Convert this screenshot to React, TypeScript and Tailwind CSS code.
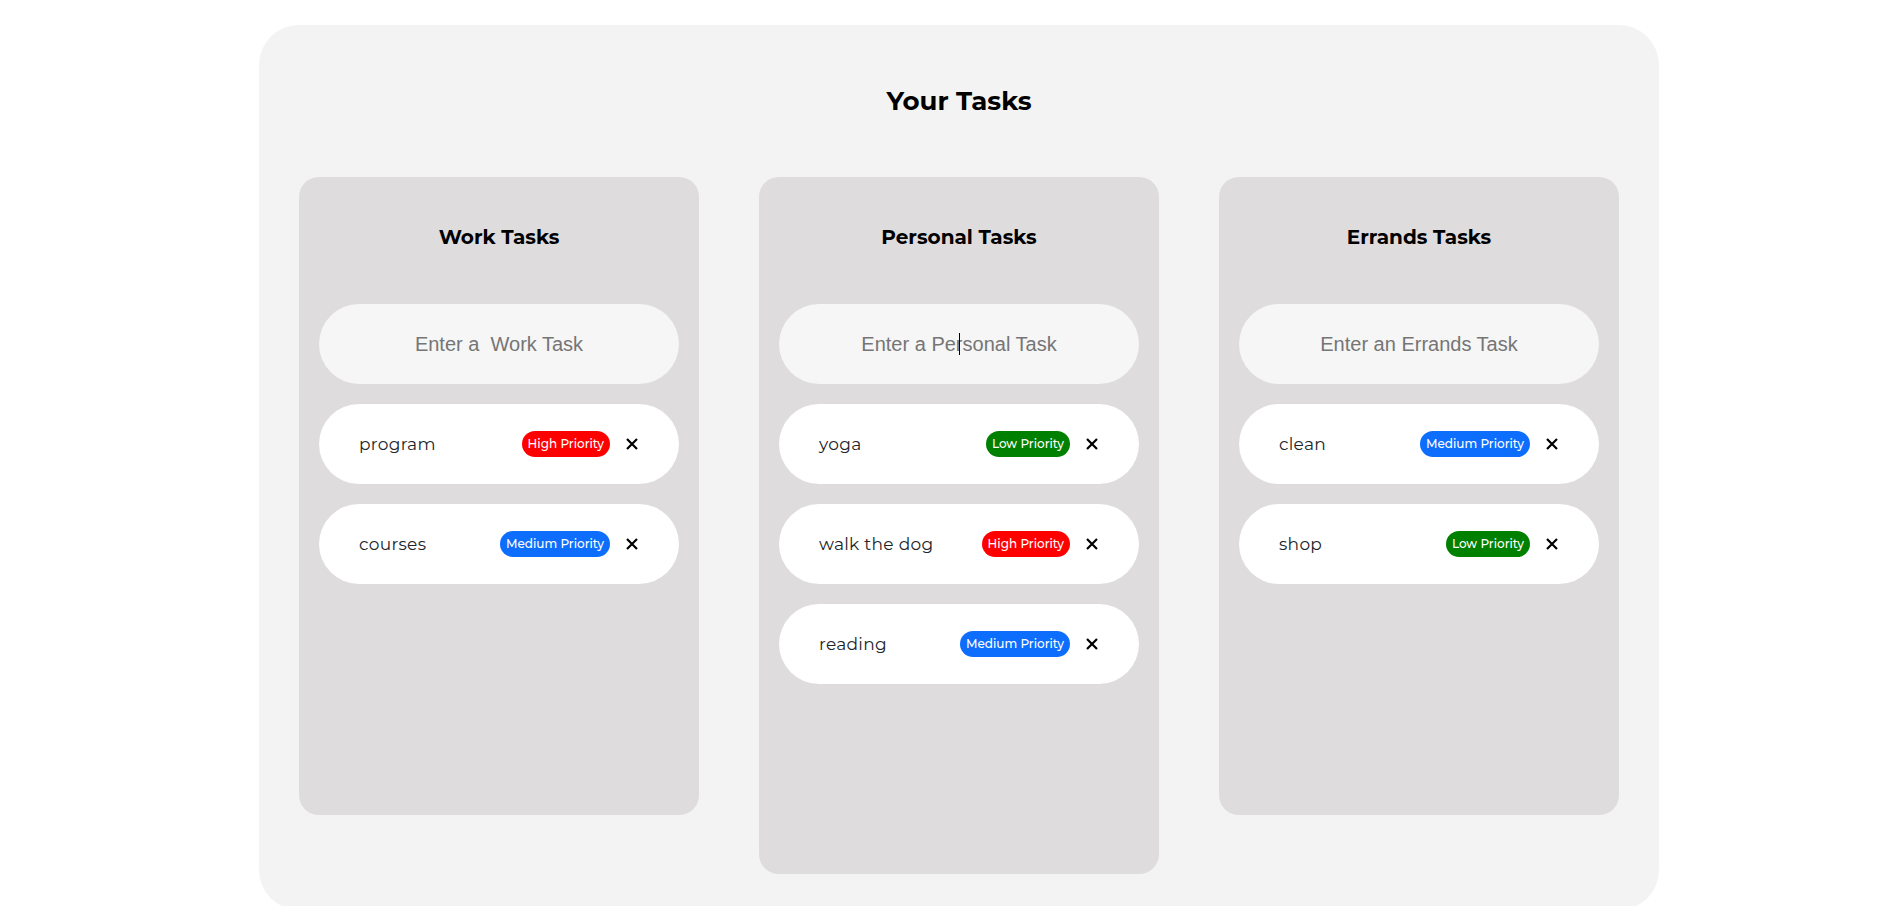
import React from "react";

type Priority = "High" | "Medium" | "Low";

const badgeClass: Record<Priority, string> = {
  High: "bg-[#ff0000]",
  Medium: "bg-[#0d6efd]",
  Low: "bg-[#008000]",
};

function XIcon() {
  return (
    <svg width="12" height="12" viewBox="0 0 12 12" className="shrink-0">
      <path d="M1 1 L11 11 M11 1 L1 11" stroke="#000" strokeWidth="2.2" strokeLinecap="butt" />
    </svg>
  );
}

function TaskItem({ text, priority }: { text: string; priority: Priority }) {
  return (
    <div className="flex h-[80px] w-[360px] items-center justify-between rounded-full bg-white pl-[40px] pr-[41px]">
      <span className="text-[17px] leading-[24px] text-[#212529] tracking-[0.3px]">{text}</span>
      <div className="flex items-center gap-[16px]">
        <span
          className={`${badgeClass[priority]} rounded-full px-[6px] py-[4px] text-[12px] font-medium leading-[18px] text-white`}
        >
          {priority} Priority
        </span>
        <XIcon />
      </div>
    </div>
  );
}

function Column({
  title,
  placeholder,
  tasks,
  cursor,
}: {
  title: string;
  placeholder: string;
  tasks: { text: string; priority: Priority }[];
  cursor?: boolean;
}) {
  return (
    <div className="flex min-h-[638px] w-[400px] flex-col items-center rounded-[20px] bg-[#dedcdd] px-[20px] pb-[190px] pt-[48px]">
      <h2 className="text-[20px] font-bold leading-[24px] text-black">{title}</h2>
      <div className="relative mt-[55px]">
        <input
          placeholder={placeholder}
          className="h-[80px] w-[360px] rounded-full bg-[#f6f6f6] text-center font-['Liberation_Sans',Arial,sans-serif] text-[20px] outline-none placeholder:text-[#757575]"
        />
        {cursor && <div className="absolute left-[180px] top-[29px] h-[22px] w-[1px] bg-black" />}
      </div>
      <div className="mt-[20px] flex flex-col gap-[20px]">
        {tasks.map((t) => (
          <TaskItem key={t.text} text={t.text} priority={t.priority} />
        ))}
      </div>
    </div>
  );
}

export default function App() {
  return (
    <div className="min-h-screen bg-white font-['Montserrat','Open_Sans',sans-serif] pt-[25px]">
      <div className="ml-[259px] flex w-[1400px] flex-col items-center rounded-[40px] bg-[#f3f3f3] px-[40px] pb-[36px] pt-[61px]">
        <h1 className="text-[26px] font-bold leading-[30px] text-black">Your Tasks</h1>
        <div className="mt-[61px] flex w-full items-start justify-between">
          <Column
            title="Work Tasks"
            placeholder="Enter a  Work Task"
            tasks={[
              { text: "program", priority: "High" },
              { text: "courses", priority: "Medium" },
            ]}
          />
          <Column
            title="Personal Tasks"
            placeholder="Enter a Personal Task"
            cursor
            tasks={[
              { text: "yoga", priority: "Low" },
              { text: "walk the dog", priority: "High" },
              { text: "reading", priority: "Medium" },
            ]}
          />
          <Column
            title="Errands Tasks"
            placeholder="Enter an Errands Task"
            tasks={[
              { text: "clean", priority: "Medium" },
              { text: "shop", priority: "Low" },
            ]}
          />
        </div>
      </div>
    </div>
  );
}
